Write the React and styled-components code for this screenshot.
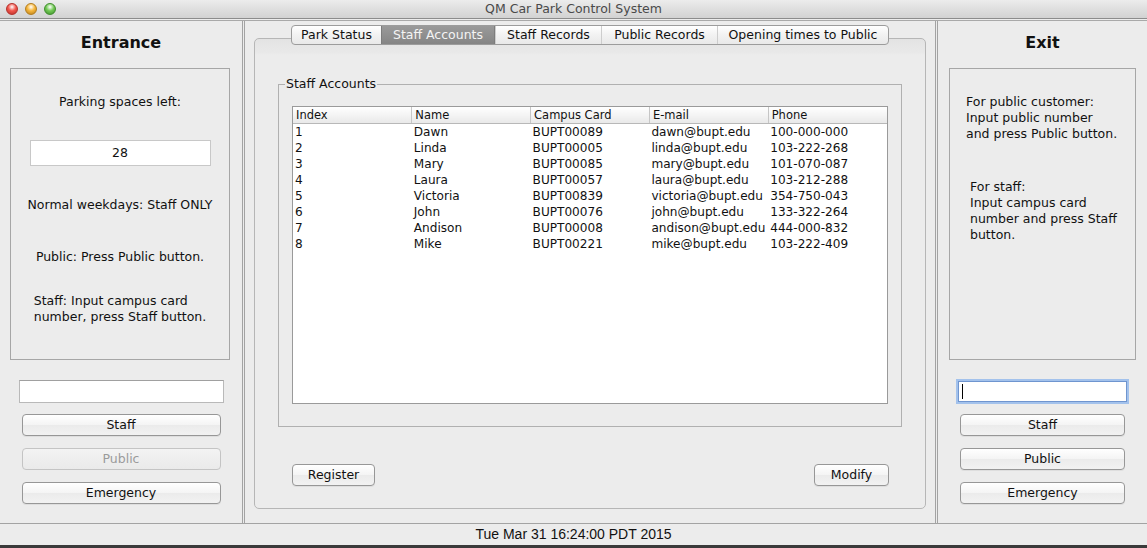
import React from 'react'
import styled, { createGlobalStyle, css } from 'styled-components'

const GlobalStyle = createGlobalStyle`
  html, body {
    margin: 0;
    padding: 0;
    background: #ececec;
  }
  body {
    font-family: "DejaVu Sans", "Liberation Sans", sans-serif;
    font-size: 12.5px;
    color: #111;
  }
  * { box-sizing: border-box; }
`

const Window = styled.div`
  width: 1147px;
  height: 548px;
  display: flex;
  flex-direction: column;
  background: #ececec;
  overflow: hidden;
`

const TitleBar = styled.header`
  height: 19px;
  flex: none;
  display: grid;
  grid-template-columns: 1fr auto 1fr;
  align-items: center;
  background: linear-gradient(#ececec, #d2d2d2);
  border-bottom: 1px solid #8c8c8c;
`

const Lights = styled.div`
  display: flex;
  gap: 7px;
  padding-left: 6px;
`

const Light = styled.span`
  width: 12px;
  height: 12px;
  border-radius: 50%;
  background: radial-gradient(circle at 50% 30%, #fff 0, ${p => p.$c} 45%, ${p => p.$d} 100%);
  border: 1px solid ${p => p.$d};
`

const Title = styled.div`
  font-size: 12.5px;
  color: #4a4a4a;
  line-height: 18px;
`

const Main = styled.main`
  flex: 1;
  display: flex;
  margin-top: 1px;
  border-top: 1px solid #a9a9a9;
  min-height: 0;
`

const SidePanel = styled.section`
  width: ${p => p.$w}px;
  flex: none;
  display: flex;
  flex-direction: column;
  align-items: center;
  ${p => p.$side === 'left' ? css`border-right: 1px solid #a3a3a3;` : css`border-left: 1px solid #a3a3a3;`}
`

const Heading = styled.h2`
  margin: 12px 0 15px;
  font: bold 16px/20px "DejaVu Sans", sans-serif;
  text-align: center;
`

const InfoBox = styled.div`
  align-self: stretch;
  height: 292px;
  margin: 0 ${p => p.$mr}px 0 ${p => p.$ml}px;
  border: 1px solid #a6a6a6;
  display: flex;
  flex-direction: column;
  align-items: ${p => p.$align || 'center'};
  padding-top: 25px;
`

const Label = styled.div`
  line-height: 16px;
  margin-top: ${p => p.$mt || 0}px;
  padding-left: ${p => p.$indent || 0}px;
  text-align: ${p => p.$left ? 'left' : 'center'};
  white-space: pre-line;
`

const CountField = styled.div`
  width: 181px;
  height: 26px;
  margin-top: 30px;
  background: #fff;
  border: 1px solid #c8c8c8;
  text-align: center;
  line-height: 24px;
`

const TextField = styled.div`
  width: ${p => p.$w}px;
  height: ${p => p.$h}px;
  margin-top: ${p => p.$mt}px;
  background: #fff;
  display: flex;
  align-items: center;
  padding-left: 3px;
  ${p => p.$focused
    ? css`
      border: 1px solid #6f95cf;
      box-shadow: 0 0 0 2px #a3c2ec;
    `
    : css`
      border: 1px solid #b9b9b9;
      border-top-color: #a0a0a0;
    `}
`

const Caret = styled.span`
  width: 1px;
  height: 15px;
  background: #000;
`

const Button = styled.button`
  width: ${p => p.$w}px;
  height: 22px;
  margin-top: ${p => p.$mt || 0}px;
  padding: 0;
  font: 12.5px/20px "DejaVu Sans", sans-serif;
  color: #111;
  border: 1px solid #979797;
  border-radius: 4px;
  background: linear-gradient(#ffffff, #f4f4f4 50%, #ebebeb 51%, #f2f2f2);
  box-shadow: 0 1px 0 rgba(0, 0, 0, 0.06);

  &:disabled {
    color: #9b9b9b;
    border-color: #c4c4c4;
    background: linear-gradient(#f3f3f3, #eaeaea);
    box-shadow: none;
  }
`

const CenterPanel = styled.section`
  flex: 1;
  margin: 0 1px;
  border-left: 1px solid #a3a3a3;
  border-right: 1px solid #a3a3a3;
  padding: 4px 9px 14px;
  display: flex;
  flex-direction: column;
  min-width: 0;
`

const TabBar = styled.nav`
  align-self: center;
  display: flex;
  height: 20px;
  border: 1px solid #9c9c9c;
  border-radius: 4px;
  overflow: hidden;
  background: linear-gradient(#ffffff, #f2f2f2 50%, #e9e9e9);
  position: relative;
  z-index: 1;
`

const Tab = styled.div`
  width: ${p => p.$w}px;
  text-align: center;
  line-height: 18px;
  border-left: 1px solid #cdcdcd;
  ${p => p.$first && css`border-left: none;`}
  ${p => p.$active && css`
    color: #f4f4f4;
    background: linear-gradient(#9a9a9a, #858585);
    border-left-color: #7d7d7d;
    border-right: 1px solid #7d7d7d;
  `}
`

const Pane = styled.div`
  flex: 1;
  margin-top: -7px;
  border: 1px solid #b6b6b6;
  border-radius: 5px;
  background: linear-gradient(#e3e3e3, #e9e9e9 14px, #ececec 16px);
  padding-top: 38px;
  display: flex;
  flex-direction: column;
`

const Group = styled.fieldset`
  margin: 0 23px;
  border: 1px solid #b0b0b0;
  padding: 15px 6px 22px;
  min-width: 0;
`

const Legend = styled.legend`
  padding: 0 1px;
  font-size: 12.5px;
  line-height: 14px;
`

const TableScroll = styled.div`
  margin: 0 7px;
  height: 298px;
  border: 1px solid #9a9a9a;
  background: #fff;
  overflow: hidden;
`

const Table = styled.table`
  width: 100%;
  border-collapse: collapse;
  table-layout: fixed;
  font-size: 12.1px;
`

const Th = styled.th`
  height: 16px;
  padding: 2px 0 0 3px;
  font-weight: normal;
  font-size: 11.5px;
  text-align: left;
  line-height: 13px;
  border-bottom: 1px solid #b8b8b8;
  border-left: 1px solid #c6c6c6;
  background: linear-gradient(#ffffff, #f4f4f4 50%, #e9e9e9);
  &:first-child { border-left: none; }
`

const Td = styled.td`
  height: 16px;
  padding: 0 0 0 2px;
  line-height: 16px;
  white-space: nowrap;
`

const ButtonRow = styled.div`
  display: flex;
  justify-content: space-between;
  margin-top: 37px;
  padding: 0 36px 0 37px;
`

const StatusBar = styled.footer`
  height: 22px;
  flex: none;
  border-top: 1px solid #a3a3a3;
  text-align: center;
  font: 14px/21px "Liberation Sans", Arial, sans-serif;
  color: #111;
`

const BottomEdge = styled.div`
  height: 3px;
  flex: none;
  background: #3a3a3a;
`

const tabs = [
  { name: 'Park Status', w: 89 },
  { name: 'Staff Accounts', w: 114 },
  { name: 'Staff Records', w: 106 },
  { name: 'Public Records', w: 116 },
  { name: 'Opening times to Public', w: 171 },
]

const staff = [
  ['1', 'Dawn', 'BUPT00089', 'dawn@bupt.edu', '100-000-000'],
  ['2', 'Linda', 'BUPT00005', 'linda@bupt.edu', '103-222-268'],
  ['3', 'Mary', 'BUPT00085', 'mary@bupt.edu', '101-070-087'],
  ['4', 'Laura', 'BUPT00057', 'laura@bupt.edu', '103-212-288'],
  ['5', 'Victoria', 'BUPT00839', 'victoria@bupt.edu', '354-750-043'],
  ['6', 'John', 'BUPT00076', 'john@bupt.edu', '133-322-264'],
  ['7', 'Andison', 'BUPT00008', 'andison@bupt.edu', '444-000-832'],
  ['8', 'Mike', 'BUPT00221', 'mike@bupt.edu', '103-222-409'],
]

export default function App() {
  return (
    <Window>
      <GlobalStyle />
      <TitleBar>
        <Lights>
          <Light $c="#f2564c" $d="#b5302a" />
          <Light $c="#f6b63a" $d="#b47d1d" />
          <Light $c="#72c955" $d="#3f8e2c" />
        </Lights>
        <Title>QM Car Park Control System</Title>
        <div />
      </TitleBar>

      <Main>
        <SidePanel $w={243} $side="left">
          <Heading>Entrance</Heading>
          <InfoBox $ml={10} $mr={12}>
            <Label>Parking spaces left:</Label>
            <CountField>28</CountField>
            <Label $mt={31}>Normal weekdays: Staff ONLY</Label>
            <Label $mt={36}>Public: Press Public button.</Label>
            <Label $mt={28} $left>{'Staff: Input campus card\nnumber, press Staff button.'}</Label>
          </InfoBox>
          <TextField $w={205} $h={23} $mt={20} />
          <Button $w={199} $mt={11}>Staff</Button>
          <Button $w={199} $mt={12} disabled>Public</Button>
          <Button $w={199} $mt={12}>Emergency</Button>
        </SidePanel>

        <CenterPanel>
          <TabBar>
            {tabs.map((t, i) => (
              <Tab key={t.name} $w={t.w} $first={i === 0} $active={t.name === 'Staff Accounts'}>
                {t.name}
              </Tab>
            ))}
          </TabBar>
          <Pane>
            <Group>
              <Legend>Staff Accounts</Legend>
              <TableScroll>
                <Table>
                  <thead>
                    <tr>
                      <Th>Index</Th>
                      <Th>Name</Th>
                      <Th>Campus Card</Th>
                      <Th>E-mail</Th>
                      <Th>Phone</Th>
                    </tr>
                  </thead>
                  <tbody>
                    {staff.map(row => (
                      <tr key={row[0]}>
                        {row.map((cell, i) => <Td key={i}>{cell}</Td>)}
                      </tr>
                    ))}
                  </tbody>
                </Table>
              </TableScroll>
            </Group>
            <ButtonRow>
              <Button $w={83}>Register</Button>
              <Button $w={75}>Modify</Button>
            </ButtonRow>
          </Pane>
        </CenterPanel>

        <SidePanel $w={210} $side="right">
          <Heading>Exit</Heading>
          <InfoBox $ml={11} $mr={11} $align="flex-start">
            <Label $left $indent={16}>{'For public customer:\nInput public number\nand press Public button.'}</Label>
            <Label $left $indent={20} $mt={37}>{'For staff:\nInput campus card\nnumber and press Staff\nbutton.'}</Label>
          </InfoBox>
          <TextField $w={169} $h={21} $mt={21} $focused>
            <Caret />
          </TextField>
          <Button $w={165} $mt={12}>Staff</Button>
          <Button $w={165} $mt={12}>Public</Button>
          <Button $w={165} $mt={12}>Emergency</Button>
        </SidePanel>
      </Main>

      <StatusBar>Tue Mar 31 16:24:00 PDT 2015</StatusBar>
      <BottomEdge />
    </Window>
  )
}
